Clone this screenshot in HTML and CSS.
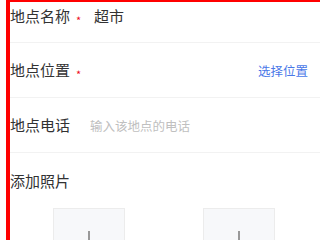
FILE: index.html
```html
<!DOCTYPE html>
<html>
<head>
    <meta charset="UTF-8">
    <title>添加地点</title>
    <link rel="stylesheet" href="styles.css">
</head>
<body>
    <div class="form">
        <div class="cell cell-first">
            <span class="label">地点名称</span><span class="required">*</span>
            <span class="value">超市</span>
        </div>
        <div class="cell">
            <span class="label">地点位置</span><span class="required">*</span>
            <span class="link">选择位置</span>
        </div>
        <div class="cell">
            <span class="label label-wide">地点电话</span>
            <span class="placeholder">输入该地点的电话</span>
        </div>
        <div class="cell cell-plain">
            <span class="label">添加照片</span>
        </div>
        <!-- photo uploaders -->
        <div class="uploads">
            <div class="upload-box">
                <svg width="26" height="26" viewBox="0 0 26 26"><path d="M13 0v26M0 13h26" stroke="#999" stroke-width="2"/></svg>
            </div>
            <div class="upload-box">
                <svg width="26" height="26" viewBox="0 0 26 26"><path d="M13 0v26M0 13h26" stroke="#999" stroke-width="2"/></svg>
            </div>
        </div>
    </div>
</body>
</html>
```

FILE: styles.css
```css
body {
    margin: 0;
    padding: 0;
    background: white;
    font-family: "Noto Sans CJK SC", "Noto Sans", sans-serif;
    color: #323233;
    overflow: hidden;
}

/* outlined form */
.form {
    margin-left: 6px;
    border-left: 4px solid #ff0000;
    border-top: 2px solid #ff0000;
}

.cell {
    display: flex;
    align-items: center;
    height: 55px;
    box-sizing: border-box;
    border-bottom: 1px solid #f2f2f2;
    padding-right: 12px;
}

.cell-first {
    height: 41px;
    padding-bottom: 12px;
}

.cell-plain {
    border-bottom: none;
}

.label {
    font-size: 15px;
    line-height: 20px;
    color: #323233;
}

.label-wide {
    width: 80px;
}

.required {
    color: #ee0a24;
    font-size: 11px;
    line-height: 12px;
    margin-left: 6px;
    margin-top: 8px;
    width: 18px;
}

.value {
    font-size: 15px;
    line-height: 20px;
    color: #323233;
}

.link {
    margin-left: auto;
    font-size: 12.5px;
    color: #4a78e8;
}

.placeholder {
    font-size: 12.5px;
    color: #c0c0c0;
}

.uploads {
    display: flex;
    gap: 78px;
    padding-left: 43px;
}

.upload-box {
    width: 72px;
    height: 72px;
    box-sizing: border-box;
    background: #f7f8fa;
    border: 1px solid #ececec;
    display: flex;
    align-items: center;
    justify-content: center;
}
```
